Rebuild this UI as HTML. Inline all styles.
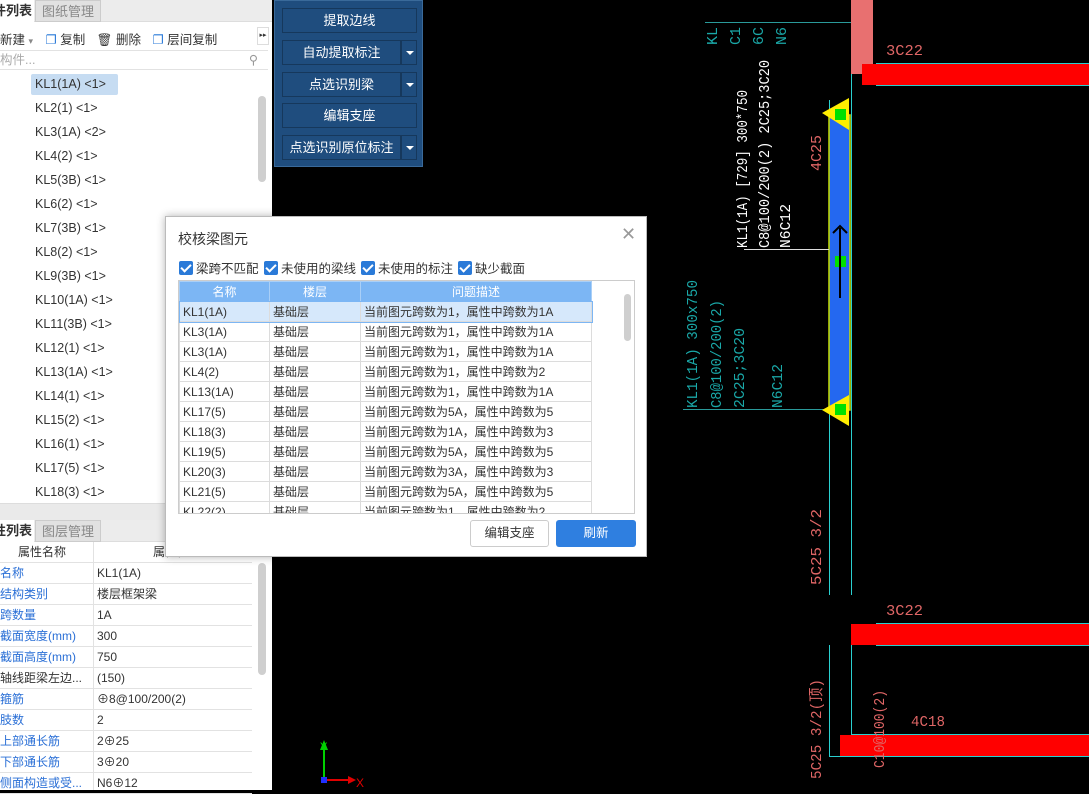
<!DOCTYPE html>
<html><head><meta charset="utf-8"><style>
*{margin:0;padding:0;box-sizing:border-box}
body{width:1089px;height:790px;overflow:hidden;background:#000;font-family:"Liberation Sans","Noto Sans CJK SC",sans-serif;font-size:12px;color:#333;position:relative}
.abs{position:absolute}
.left{left:0;top:0;width:272px;height:790px;background:#fff}
.tab{position:absolute;top:0;height:22px;line-height:22px;font-size:13px;text-align:center;white-space:nowrap;overflow:hidden}
.li{position:absolute;left:35px;font-size:12.5px;color:#333}
.prow{position:absolute;left:0;width:252px;height:21px;border-bottom:1px solid #e2e2e2;font-size:12px;line-height:20px;white-space:nowrap}
.prow .k{position:absolute;left:0;color:#2a6fd6}
.prow .v{position:absolute;left:97px;color:#333}
.btn{position:absolute;left:282px;width:135px;height:25px;background:#1f4d7e;border:1px solid #16385c;color:#fff;font-size:13px;text-align:center;line-height:23px}
.dd{position:absolute;left:401px;width:16px;height:25px;background:#1f4d7e;border:1px solid #16385c}
.dd:after{content:"";position:absolute;left:4px;top:10px;border:4px solid transparent;border-top:4px solid #fff}
.dlg{left:165px;top:216px;width:482px;height:341px;background:#fff;border:1px solid #bbb;box-shadow:0 0 8px rgba(0,0,0,.3)}
.cb{position:absolute;top:41px;font-size:12.5px;color:#333}
.cb i{display:inline-block;width:14px;height:14px;background:#2a7ad8;border-radius:2px;vertical-align:-2px;margin-right:3px;position:relative}
.cb i:after{content:"";position:absolute;left:4px;top:1px;width:4px;height:8px;border:solid #fff;border-width:0 2px 2px 0;transform:rotate(45deg)}
table{border-collapse:collapse;font-size:12px}
td{height:20px;border:1px solid #dcdcdc;padding-left:3px;white-space:nowrap;color:#333}
th{height:20px;background:#7cb6f4;color:#fff;font-weight:normal;border:1px solid #a9cff7}
</style></head><body>

<svg class="abs" style="left:0;top:0" width="1089" height="790">
<g stroke="#2ad0d0" stroke-width="1" fill="none">
<line x1="829.5" y1="100" x2="829.5" y2="595"/>
<line x1="851.5" y1="0" x2="851.5" y2="595"/>
<line x1="876" y1="63.5" x2="1089" y2="63.5"/>
<line x1="876" y1="85.5" x2="1089" y2="85.5"/>
<line x1="876" y1="623.5" x2="1089" y2="623.5"/>
<line x1="876" y1="645.5" x2="1089" y2="645.5"/>
<line x1="829.5" y1="645" x2="829.5" y2="756"/>
<line x1="851.5" y1="645" x2="851.5" y2="734"/>
<line x1="851" y1="734.5" x2="1089" y2="734.5"/>
<line x1="829" y1="756.5" x2="1089" y2="756.5"/>
<line x1="705" y1="22.5" x2="862" y2="22.5" stroke="#2a9a9a"/>
<line x1="683" y1="409.5" x2="829" y2="409.5" stroke="#2a9a9a"/>
</g>
<rect x="851" y="0" width="22" height="74" fill="#e87070"/>
<rect x="862" y="64" width="227" height="21" fill="#ff0000"/>
<rect x="851" y="624" width="238" height="21" fill="#ff0000"/>
<rect x="840" y="735" width="249" height="21" fill="#ff0000"/>
<rect x="829" y="115" width="21" height="295" fill="#2468f0" stroke="#c8e000" stroke-width="1.5"/>
<polygon points="822,113 849,98 849,130" fill="#ffee00"/>
<polygon points="822,410 849,395 849,426" fill="#ffee00"/>
<rect x="835" y="109" width="11" height="11" fill="#00e000"/>
<rect x="835" y="256" width="11" height="11" fill="#00e000"/>
<rect x="835" y="404" width="11" height="11" fill="#00e000"/>
<g stroke="#000" stroke-width="2" fill="none"><line x1="840" y1="228" x2="840" y2="298"/><polyline points="833,233 840,226 847,233"/></g>
<line x1="744" y1="249.5" x2="829" y2="249.5" stroke="#ddd"/>
<g font-family="Liberation Mono,monospace" font-size="15">
<g fill="#fff">
<text transform="translate(747,248) rotate(-90)" textLength="158" lengthAdjust="spacingAndGlyphs">KL1(1A) [729] 300*750</text>
<text transform="translate(769,248) rotate(-90)" textLength="188" lengthAdjust="spacingAndGlyphs">C8@100/200(2) 2C25;3C20</text>
<text transform="translate(790,248) rotate(-90)" textLength="44" lengthAdjust="spacingAndGlyphs">N6C12</text>
</g>
<g fill="#1aa8a8">
<text transform="translate(697,408) rotate(-90)" textLength="128" lengthAdjust="spacingAndGlyphs">KL1(1A) 300x750</text>
<text transform="translate(721,408) rotate(-90)" textLength="108" lengthAdjust="spacingAndGlyphs">C8@100/200(2)</text>
<text transform="translate(744,408) rotate(-90)" textLength="80" lengthAdjust="spacingAndGlyphs">2C25;3C20</text>
<text transform="translate(782,408) rotate(-90)" textLength="44" lengthAdjust="spacingAndGlyphs">N6C12</text>
<text transform="translate(717,45) rotate(-90)">KL</text>
<text transform="translate(740,45) rotate(-90)">C1</text>
<text transform="translate(763,45) rotate(-90)">6C</text>
<text transform="translate(786,45) rotate(-90)">N6</text>
</g>
<g fill="#e06666">
<text transform="translate(821,171) rotate(-90)" textLength="36" lengthAdjust="spacingAndGlyphs">4C25</text>
<text x="886" y="55" textLength="37" lengthAdjust="spacingAndGlyphs">3C22</text>
<text transform="translate(821,585) rotate(-90)" textLength="76" lengthAdjust="spacingAndGlyphs">5C25 3/2</text>
<text x="886" y="615" textLength="37" lengthAdjust="spacingAndGlyphs">3C22</text>
<text transform="translate(821,779) rotate(-90)" textLength="100" lengthAdjust="spacingAndGlyphs">5C25 3/2(顶)</text>
<text transform="translate(884,768) rotate(-90)" textLength="78" lengthAdjust="spacingAndGlyphs">C10@100(2)</text>
<text x="911" y="726" textLength="34" lengthAdjust="spacingAndGlyphs">4C18</text>
</g>
</g>
<g stroke-width="2"><line x1="324" y1="780" x2="324" y2="748" stroke="#00d000"/><line x1="324" y1="780" x2="350" y2="780" stroke="#e00000"/></g>
<polygon points="320,750 324,740 328,750" fill="#00d000"/>
<polygon points="348,776 356,780 348,784" fill="#e00000"/>
<rect x="321" y="777" width="6" height="6" fill="#2030ff"/>
<text x="320" y="750" fill="#00d000" font-size="11">Y</text>
<text x="356" y="787" fill="#e00000" font-size="12">X</text>
</svg>

<div class="abs left">
<div class="abs" style="left:0;top:0;width:272px;height:22px;background:#ececec;border-bottom:1px solid #ddd"></div>
<div class="tab" style="left:0;width:34px;background:#fff;font-weight:bold;color:#333;text-align:right;padding-right:2px;direction:rtl">件列表</div>
<div class="tab" style="left:35px;width:66px;background:#e1e1e1;color:#888;border:1px solid #ccc">图纸管理</div>
<div class="abs" style="top:29px;left:0;font-size:12.5px;white-space:nowrap">新建 <span style="color:#888;font-size:9px">▾</span>
<span style="margin-left:9px;color:#2a7ad8">❐</span> 复制 <span style="margin-left:8px">🗑</span> 删除 <span style="margin-left:8px;color:#2a7ad8">❐</span> 层间复制</div>
<div class="abs" style="left:257px;top:27px;width:12px;height:18px;border:1px solid #ddd;font-size:7px;line-height:16px;text-align:center">▸▸</div>
<div class="abs" style="left:0;top:50px;width:268px;height:20px;border-top:1px solid #e2e2e2;border-bottom:1px solid #e2e2e2;color:#aaa;font-size:12.5px;line-height:18px">构件...<span style="position:absolute;right:10px;color:#999">⚲</span></div>
<div class="abs" style="left:31px;top:74px;width:87px;height:21px;background:#c6dcf2;border-radius:2px"></div>
<div class="abs" style="left:258px;top:96px;width:8px;height:86px;background:#cfcfcf;border-radius:4px"></div>
<div class="li" style="top:77px">KL1(1A) &lt;1&gt;</div>
<div class="li" style="top:101px">KL2(1) &lt;1&gt;</div>
<div class="li" style="top:125px">KL3(1A) &lt;2&gt;</div>
<div class="li" style="top:149px">KL4(2) &lt;1&gt;</div>
<div class="li" style="top:173px">KL5(3B) &lt;1&gt;</div>
<div class="li" style="top:197px">KL6(2) &lt;1&gt;</div>
<div class="li" style="top:221px">KL7(3B) &lt;1&gt;</div>
<div class="li" style="top:245px">KL8(2) &lt;1&gt;</div>
<div class="li" style="top:269px">KL9(3B) &lt;1&gt;</div>
<div class="li" style="top:293px">KL10(1A) &lt;1&gt;</div>
<div class="li" style="top:317px">KL11(3B) &lt;1&gt;</div>
<div class="li" style="top:341px">KL12(1) &lt;1&gt;</div>
<div class="li" style="top:365px">KL13(1A) &lt;1&gt;</div>
<div class="li" style="top:389px">KL14(1) &lt;1&gt;</div>
<div class="li" style="top:413px">KL15(2) &lt;1&gt;</div>
<div class="li" style="top:437px">KL16(1) &lt;1&gt;</div>
<div class="li" style="top:461px">KL17(5) &lt;1&gt;</div>
<div class="li" style="top:485px">KL18(3) &lt;1&gt;</div>
<div class="abs" style="left:0;top:503px;width:272px;height:17px;background:#eaeaea;border-top:1px solid #ddd"></div>
<div class="abs" style="left:0;top:520px;width:272px;height:22px;background:#ececec;border-bottom:1px solid #ddd"></div>
<div class="tab" style="left:0;top:520px;width:34px;background:#fff;font-weight:bold;text-align:right;padding-right:2px;direction:rtl">性列表</div>
<div class="tab" style="left:35px;top:520px;width:66px;background:#e1e1e1;color:#888;border:1px solid #ccc">图层管理</div>
<div class="prow" style="top:542px;background:#fff"><span style="position:absolute;left:18px;color:#333">属性名称</span><span style="position:absolute;left:153px">属性值</span></div>
<div class="abs" style="left:93px;top:542px;width:1px;height:248px;background:#e2e2e2"></div>
<div class="abs" style="left:258px;top:563px;width:8px;height:112px;background:#cfcfcf;border-radius:4px"></div>
<div class="prow" style="top:563px"><span class="k">名称</span><span class="v">KL1(1A)</span></div>
<div class="prow" style="top:584px"><span class="k">结构类别</span><span class="v">楼层框架梁</span></div>
<div class="prow" style="top:605px"><span class="k">跨数量</span><span class="v">1A</span></div>
<div class="prow" style="top:626px"><span class="k">截面宽度(mm)</span><span class="v">300</span></div>
<div class="prow" style="top:647px"><span class="k">截面高度(mm)</span><span class="v">750</span></div>
<div class="prow" style="top:668px"><span class="k" style="color:#333">轴线距梁左边...</span><span class="v">(150)</span></div>
<div class="prow" style="top:689px"><span class="k">箍筋</span><span class="v">⊕8@100/200(2)</span></div>
<div class="prow" style="top:710px"><span class="k">肢数</span><span class="v">2</span></div>
<div class="prow" style="top:731px"><span class="k">上部通长筋</span><span class="v">2⊕25</span></div>
<div class="prow" style="top:752px"><span class="k">下部通长筋</span><span class="v">3⊕20</span></div>
<div class="prow" style="top:773px"><span class="k">侧面构造或受...</span><span class="v">N6⊕12</span></div>
</div>

<div class="abs" style="left:274px;top:0;width:149px;height:167px;background:#1f4d7e;border:1px solid #3a6a9a"></div>
<div class="btn" style="top:8px">提取边线</div>
<div class="btn" style="top:40px;width:119px">自动提取标注</div><div class="dd" style="top:40px"></div>
<div class="btn" style="top:72px;width:119px">点选识别梁</div><div class="dd" style="top:72px"></div>
<div class="btn" style="top:103px">编辑支座</div>
<div class="btn" style="top:135px;width:119px">点选识别原位标注</div><div class="dd" style="top:135px"></div>

<div class="abs dlg">
<div class="abs" style="left:12px;top:12px;font-size:14px;color:#333">校核梁图元</div>
<div class="abs" style="left:455px;top:7px;font-size:18px;color:#999">✕</div>
<div class="cb" style="left:13px"><i></i>梁跨不匹配</div>
<div class="cb" style="left:98px"><i></i>未使用的梁线</div>
<div class="cb" style="left:195px"><i></i>未使用的标注</div>
<div class="cb" style="left:292px"><i></i>缺少截面</div>
<div class="abs" style="left:12px;top:63px;width:457px;height:234px;border:1px solid #ccc;overflow:hidden;background:#fff">
<table style="width:413px">
<tr><th style="width:90px">名称</th><th style="width:91px">楼层</th><th>问题描述</th></tr>
<tr style="background:#d6e8fb;outline:1px solid #7cb6f4"><td>KL1(1A)</td><td>基础层</td><td>当前图元跨数为1，属性中跨数为1A</td></tr>
<tr><td>KL3(1A)</td><td>基础层</td><td>当前图元跨数为1，属性中跨数为1A</td></tr>
<tr><td>KL3(1A)</td><td>基础层</td><td>当前图元跨数为1，属性中跨数为1A</td></tr>
<tr><td>KL4(2)</td><td>基础层</td><td>当前图元跨数为1，属性中跨数为2</td></tr>
<tr><td>KL13(1A)</td><td>基础层</td><td>当前图元跨数为1，属性中跨数为1A</td></tr>
<tr><td>KL17(5)</td><td>基础层</td><td>当前图元跨数为5A，属性中跨数为5</td></tr>
<tr><td>KL18(3)</td><td>基础层</td><td>当前图元跨数为1A，属性中跨数为3</td></tr>
<tr><td>KL19(5)</td><td>基础层</td><td>当前图元跨数为5A，属性中跨数为5</td></tr>
<tr><td>KL20(3)</td><td>基础层</td><td>当前图元跨数为3A，属性中跨数为3</td></tr>
<tr><td>KL21(5)</td><td>基础层</td><td>当前图元跨数为5A，属性中跨数为5</td></tr>
<tr><td>KL22(2)</td><td>基础层</td><td>当前图元跨数为1，属性中跨数为2</td></tr>
</table>
<div class="abs" style="left:445px;top:13px;width:7px;height:47px;background:#cfcfcf;border-radius:4px"></div>
</div>
<div class="abs" style="left:304px;top:303px;width:79px;height:27px;border:1px solid #ccc;border-radius:3px;text-align:center;line-height:25px;font-size:12.5px">编辑支座</div>
<div class="abs" style="left:390px;top:303px;width:80px;height:27px;background:#2f7fe0;border-radius:3px;color:#fff;text-align:center;line-height:27px;font-size:12.5px">刷新</div>
</div>
</body></html>
